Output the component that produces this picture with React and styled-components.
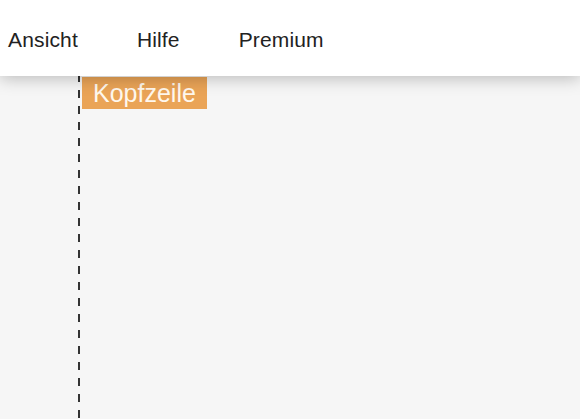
import React from 'react';
import styled, { createGlobalStyle } from 'styled-components';

const GlobalStyle = createGlobalStyle`
  html, body {
    margin: 0;
    padding: 0;
    height: 100%;
  }
  body {
    background: #f6f6f6;
    font-family: "Liberation Sans", Arial, Helvetica, sans-serif;
    overflow: hidden;
  }
`;

const Shell = styled.div`
  display: flex;
  flex-direction: column;
  height: 100vh;
`;

const Toolbar = styled.nav`
  position: relative;
  z-index: 1;
  flex: 0 0 76px;
  display: flex;
  align-items: center;
  gap: 59px;
  padding: 3px 0 0 8px;
  box-sizing: border-box;
  background: #fff;
  box-shadow: 0 2px 16px rgba(0, 0, 0, 0.26);
`;

const MenuItem = styled.span`
  font-size: 21px;
  color: #222;
  letter-spacing: 0.15px;
  white-space: nowrap;
`;

const Workspace = styled.main`
  flex: 1;
  display: flex;
  align-items: flex-start;
  padding-left: 78px;
`;

// Seitenrand: gestrichelte Hilfslinie
const MarginGuide = styled.div`
  align-self: stretch;
  width: 2px;
  background: repeating-linear-gradient(
    to bottom,
    #333 0 6px,
    transparent 6px 14px,
    #333 14px 16px
  );
`;

const SectionTag = styled.div`
  margin: 1px 0 0 2px;
  height: 32px;
  padding: 0 11px 0 11px;
  display: flex;
  align-items: center;
  background: #eaa457;
  color: #fff8ee;
  font-size: 25px;
`;

const menu = ['Ansicht', 'Hilfe', 'Premium'];

export default function App() {
  return (
    <>
      <GlobalStyle />
      <Shell>
        <Toolbar>
          {menu.map((m) => (
            <MenuItem key={m}>{m}</MenuItem>
          ))}
        </Toolbar>
        <Workspace>
          <MarginGuide />
          <SectionTag>Kopfzeile</SectionTag>
        </Workspace>
      </Shell>
    </>
  );
}
